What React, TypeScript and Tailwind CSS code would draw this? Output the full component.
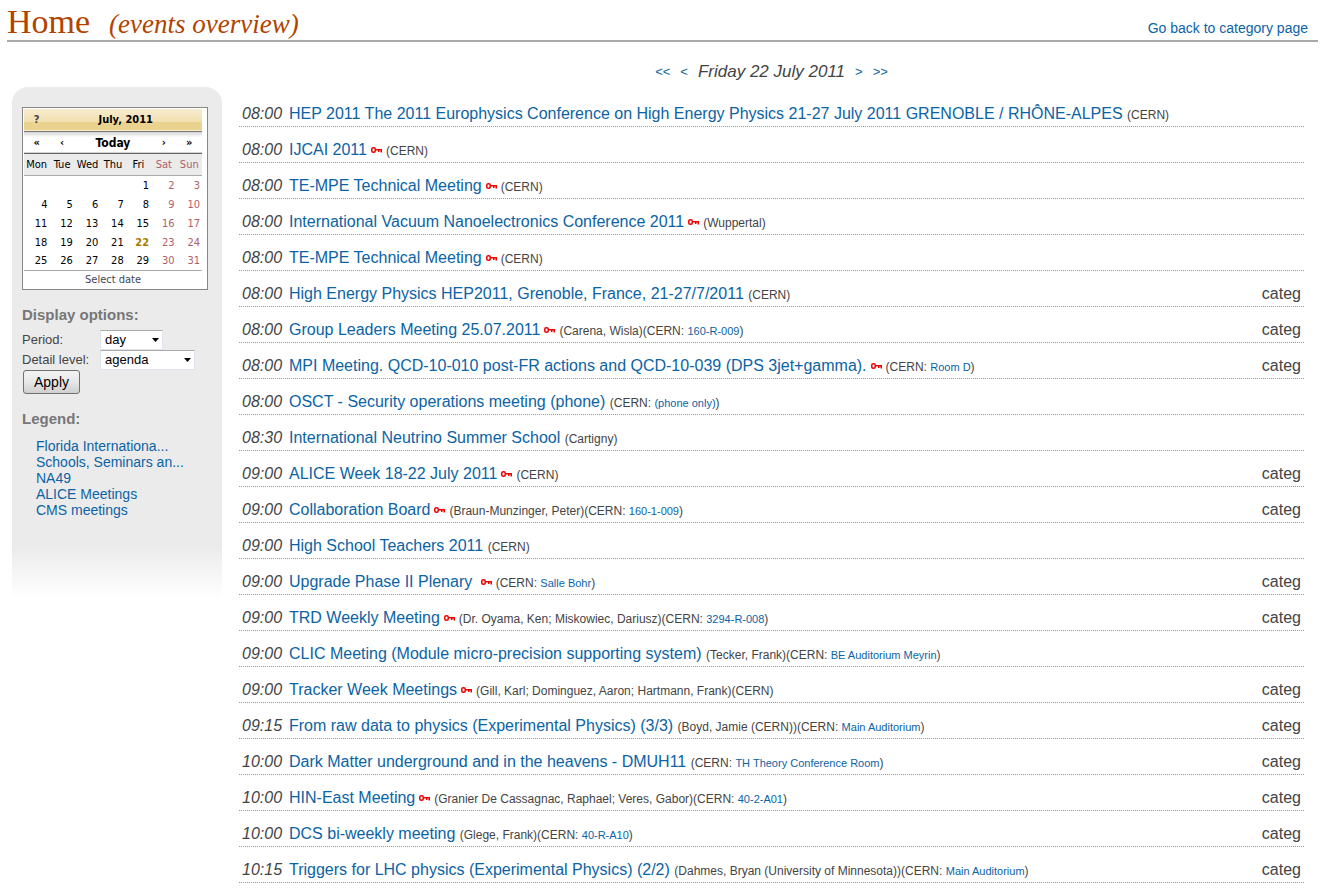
import React from "react";

type EventItem = {
  time: string;
  title: string;
  locked?: boolean;
  info: string;
  room?: string;
  categ?: boolean;
};

const events: EventItem[] = [
  { time: "08:00", title: "HEP 2011 The 2011 Europhysics Conference on High Energy Physics 21-27 July 2011 GRENOBLE / RHÔNE-ALPES", info: "(CERN)" },
  { time: "08:00", title: "IJCAI 2011", locked: true, info: "(CERN)" },
  { time: "08:00", title: "TE-MPE Technical Meeting", locked: true, info: "(CERN)" },
  { time: "08:00", title: "International Vacuum Nanoelectronics Conference 2011", locked: true, info: "(Wuppertal)" },
  { time: "08:00", title: "TE-MPE Technical Meeting", locked: true, info: "(CERN)" },
  { time: "08:00", title: "High Energy Physics HEP2011, Grenoble, France, 21-27/7/2011", info: "(CERN)", categ: true },
  { time: "08:00", title: "Group Leaders Meeting 25.07.2011", locked: true, info: "(Carena, Wisla)(CERN:", room: "160-R-009", categ: true },
  { time: "08:00", title: "MPI Meeting. QCD-10-010 post-FR actions and QCD-10-039 (DPS 3jet+gamma).", locked: true, info: "(CERN:", room: "Room D", categ: true },
  { time: "08:00", title: "OSCT - Security operations meeting (phone)", info: "(CERN:", room: "(phone only)" },
  { time: "08:30", title: "International Neutrino Summer School", info: "(Cartigny)" },
  { time: "09:00", title: "ALICE Week 18-22 July 2011", locked: true, info: "(CERN)", categ: true },
  { time: "09:00", title: "Collaboration Board", locked: true, info: "(Braun-Munzinger, Peter)(CERN:", room: "160-1-009", categ: true },
  { time: "09:00", title: "High School Teachers 2011", info: "(CERN)" },
  { time: "09:00", title: "Upgrade Phase II Plenary\u00a0", locked: true, info: "(CERN:", room: "Salle Bohr", categ: true },
  { time: "09:00", title: "TRD Weekly Meeting", locked: true, info: "(Dr. Oyama, Ken; Miskowiec, Dariusz)(CERN:", room: "3294-R-008", categ: true },
  { time: "09:00", title: "CLIC Meeting (Module micro-precision supporting system)", info: "(Tecker, Frank)(CERN:", room: "BE Auditorium Meyrin" },
  { time: "09:00", title: "Tracker Week Meetings", locked: true, info: "(Gill, Karl; Dominguez, Aaron; Hartmann, Frank)(CERN)", categ: true },
  { time: "09:15", title: "From raw data to physics (Experimental Physics) (3/3)", info: "(Boyd, Jamie (CERN))(CERN:", room: "Main Auditorium", categ: true },
  { time: "10:00", title: "Dark Matter underground and in the heavens - DMUH11", info: "(CERN:", room: "TH Theory Conference Room", categ: true },
  { time: "10:00", title: "HIN-East Meeting", locked: true, info: "(Granier De Cassagnac, Raphael; Veres, Gabor)(CERN:", room: "40-2-A01", categ: true },
  { time: "10:00", title: "DCS bi-weekly meeting", info: "(Glege, Frank)(CERN:", room: "40-R-A10", categ: true },
  { time: "10:15", title: "Triggers for LHC physics (Experimental Physics) (2/2)", info: "(Dahmes, Bryan (University of Minnesota))(CERN:", room: "Main Auditorium", categ: true },
];

const weekdays = ["Mon", "Tue", "Wed", "Thu", "Fri", "Sat", "Sun"];
const legend = ["Florida Internationa...", "Schools, Seminars an...", "NA49", "ALICE Meetings", "CMS meetings"];

// July 2011 starts on a Friday.
const weeks: (number | null)[][] = [0, 1, 2, 3, 4].map((w) =>
  weekdays.map((_, d) => {
    const day = w * 7 + d - 3;
    return day >= 1 ? day : null;
  }),
);

function KeyIcon() {
  return (
    <svg className="mx-1 inline-block align-baseline" width="11" height="8" viewBox="0 0 11 8" fill="none" stroke="#f00000" strokeWidth="1.5" role="img" aria-label="Protected">
      <rect x="0.750" y="0.750" width="3.500" height="4.500" rx="1.500" />
      <path d="M4.500 2.750H11M7.750 3v2M10.250 3v2.500" />
    </svg>
  );
}

function EventRow({ event }: { event: EventItem }) {
  return (
    <li className="flex h-9 items-baseline border-b border-dotted border-[#999] pr-[3px] pt-[13px] text-base leading-5">
      <time className="w-[50px] shrink-0 pl-[3px] italic">{event.time}</time>
      <div className="min-w-0 flex-1 whitespace-nowrap">
        <a href="#event" className="text-[#0b63a5]">{event.title}</a>
        {event.locked ? <KeyIcon /> : " "}
        <span className="text-[12px]">
          {event.info}
          {event.room && (
            <>
              {" "}
              <a href="#room" className="text-[11px] text-[#0b63a5]">{event.room}</a>)
            </>
          )}
        </span>
      </div>
      {event.categ && <span>categ</span>}
    </li>
  );
}

function Calendar() {
  return (
    <div className="w-[186px] border border-[#888] bg-white p-px pr-[5px] font-['DejaVu_Sans_Condensed','Noto_Sans',sans-serif] text-[11px] leading-4 text-black">
      <table className="w-full table-fixed border-collapse text-center">
        <thead>
          <tr className="h-[22px] border-b border-[#777] bg-linear-to-b from-[#f8ecd0] via-[#f1dfb0] via-60% to-[#ead28f] to-60% font-bold">
            <td className="p-0 pt-px"><button type="button" className="text-[#444]">?</button></td>
            <td colSpan={6} className="p-0 pt-px">July, 2011</td>
          </tr>
          <tr className="h-[22px] border-b border-[#666] bg-linear-to-b from-[#ccc] to-white to-30% font-bold">
            <td className="p-0 pt-px"><button type="button">«</button></td>
            <td className="p-0 pt-px"><button type="button">‹</button></td>
            <td colSpan={3} className="p-0 pt-px text-[12px]"><button type="button">Today</button></td>
            <td className="p-0 pt-px"><button type="button">›</button></td>
            <td className="p-0 pt-px"><button type="button">»</button></td>
          </tr>
          <tr className="h-[22px] border-b border-[#aaa] bg-[#ebebeb]">
            {weekdays.map((name, i) => (
              <th key={name} className={i > 4 ? "p-0 pt-px font-normal text-[#b0606a]" : "p-0 pt-px font-normal"}>{name}</th>
            ))}
          </tr>
        </thead>
        <tbody className="text-right">
          {weeks.map((week, w) => (
            <tr key={w} className="h-[19px]">
              {week.map((day, d) => (
                <td
                  key={d}
                  className={
                    day === 22
                      ? "p-0 pr-[2px] pt-[2px] font-bold text-[#a67c00]"
                      : d > 4
                        ? "p-0 pr-[2px] pt-[2px] text-[#b0606a]"
                        : "p-0 pr-[2px] pt-[2px]"
                  }
                >
                  {day}
                </td>
              ))}
            </tr>
          ))}
        </tbody>
        <tfoot>
          <tr className="h-[18px] border-t border-[#aaa]">
            <td colSpan={7} className="p-0 pt-px text-[#445]">Select date</td>
          </tr>
        </tfoot>
      </table>
    </div>
  );
}

function Dropdown({ id, value, width }: { id: string; value: string; width: string }) {
  return (
    <div className={`relative ${width}`}>
      <select id={id} defaultValue={value} className="block h-5 w-full appearance-none border border-[#dfe4ec] border-t-[#aaa] bg-white pl-1 text-[13px] leading-4 text-black">
        <option>{value}</option>
      </select>
      <svg className="pointer-events-none absolute right-1 top-2" width="7" height="4" viewBox="0 0 7 4" aria-hidden="true">
        <path d="M0 0h7L3.500 4z" fill="#000" />
      </svg>
    </div>
  );
}

function Sidebar() {
  return (
    <aside className="w-[210px] shrink-0 self-start rounded-t-2xl bg-linear-to-b from-[#ebebeb] from-90% to-white px-[10px] pb-20 pt-5 text-sm leading-4">
      <Calendar />
      <h2 className="mt-[17px] text-[15px] font-bold text-[#777]">Display options:</h2>
      <form className="mt-[7px]" onSubmit={(e) => e.preventDefault()}>
        <div className="grid grid-cols-[78px_1fr] items-center text-[13px]">
          <label htmlFor="period">Period:</label>
          <Dropdown id="period" value="day" width="w-[63px]" />
          <label htmlFor="detail">Detail level:</label>
          <Dropdown id="detail" value="agenda" width="w-[95px]" />
        </div>
        <button type="submit" className="ml-px h-6 rounded-[3px] border border-[#707070] bg-linear-to-b from-[#f3f3f3] via-[#e8e8e8] to-[#cfcfcf] px-[10px] text-black">
          Apply
        </button>
      </form>
      <h2 className="mt-[17px] text-[15px] font-bold text-[#777]">Legend:</h2>
      <ul className="ml-[14px] mt-[11px]">
        {legend.map((name) => (
          <li key={name}><a href="#category" className="text-[#0b63a5]">{name}</a></li>
        ))}
      </ul>
    </aside>
  );
}

export default function App() {
  return (
    <div className="bg-white font-['Liberation_Sans',Arial,sans-serif] text-[#444]">
      <header className="ml-[7px] mr-[6px] flex h-[42px] items-end justify-between border-b-2 border-[#a9a9a9] pr-[10px]">
        <h1 className="whitespace-nowrap font-['Liberation_Serif',serif] text-[34px] leading-8 text-[#b14300]">
          Home
          <em className="ml-[19px] text-[27px]">(events overview)</em>
        </h1>
        <a href="#category" className="pb-1 text-[14px] leading-4 text-[#0b63a5]">Go back to category page</a>
      </header>
      <div className="flex pl-3 pr-5">
        <div className="flex shrink-0 pt-[45px]">
          <Sidebar />
        </div>
        <main className="ml-[17px] min-w-0 flex-1 pt-[19px]">
          <nav className="flex h-[22px] items-center justify-center gap-[10px] text-[13px] text-[#0b63a5]">
            <a href="#previous-week">&lt;&lt;</a>
            <a href="#previous-day">&lt;</a>
            <h2 className="text-[17px] italic text-[#444]">Friday 22 July 2011</h2>
            <a href="#next-day">&gt;</a>
            <a href="#next-week">&gt;&gt;</a>
          </nav>
          <ul className="mt-2">
            {events.map((event, i) => (
              <EventRow key={i} event={event} />
            ))}
          </ul>
        </main>
      </div>
    </div>
  );
}
